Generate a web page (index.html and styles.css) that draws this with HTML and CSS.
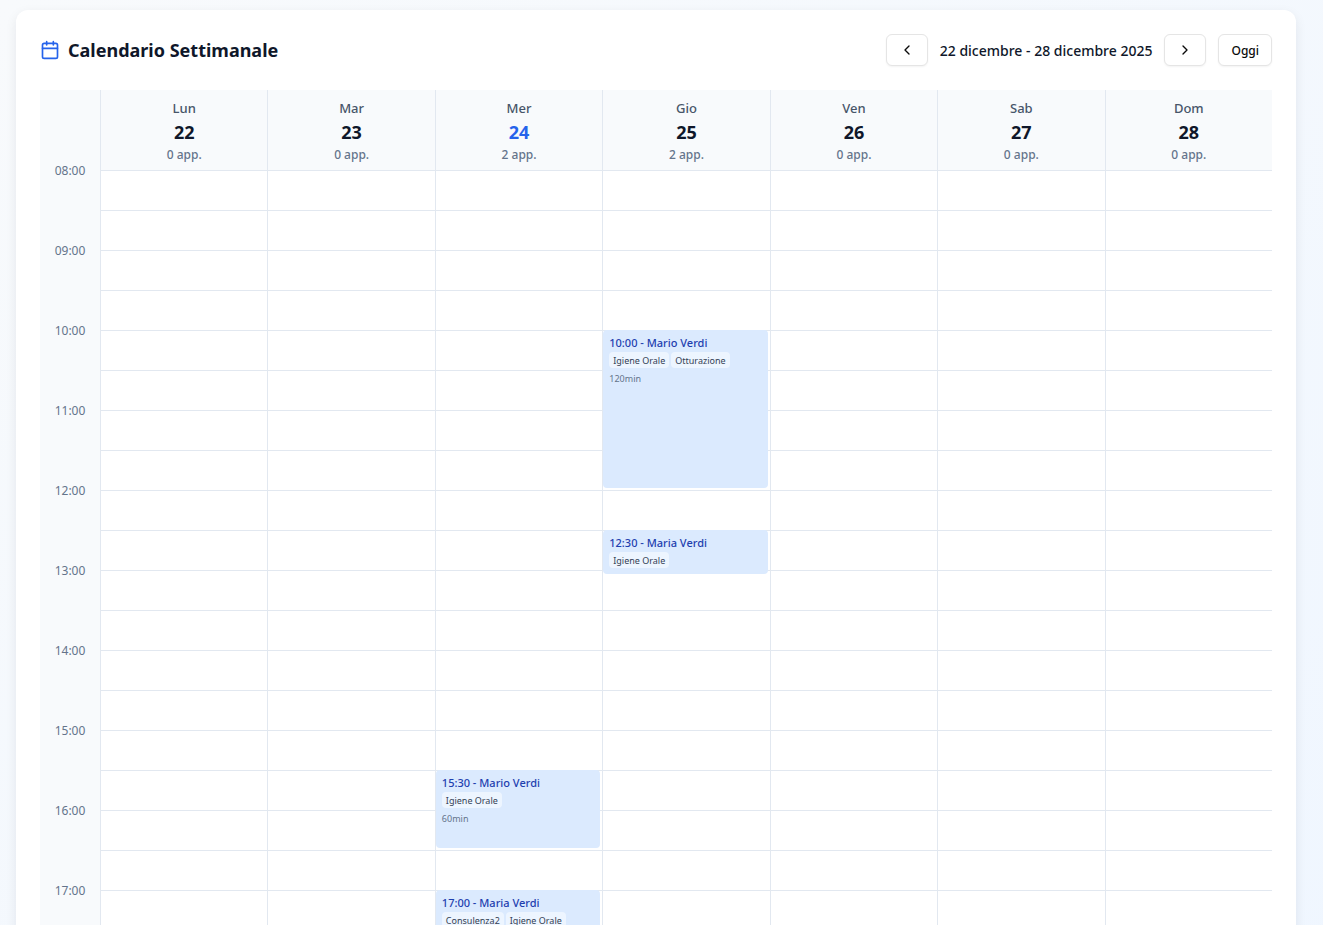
FILE: index.html
```html
<!DOCTYPE html>
<html lang="it">
<head>
    <meta charset="UTF-8">
    <meta name="viewport" content="width=device-width, initial-scale=1.0">
    <title>Calendario Settimanale</title>
    <link rel="stylesheet" href="styles.css">
</head>
<body>
    <main class="card">
        <header class="toolbar">
            <h1 class="title">
                <svg class="title-icon" viewBox="0 0 24 24" aria-hidden="true">
                    <path d="M8 2v4M16 2v4M3 10h18"/>
                    <rect x="3" y="4" width="18" height="18" rx="2"/>
                </svg>
                Calendario Settimanale
            </h1>
            <div class="nav">
                <button type="button" class="btn btn-icon" aria-label="Settimana precedente">
                    <svg viewBox="0 0 24 24"><path d="m15 18-6-6 6-6"/></svg>
                </button>
                <span class="range">22 dicembre - 28 dicembre 2025</span>
                <button type="button" class="btn btn-icon" aria-label="Settimana successiva">
                    <svg viewBox="0 0 24 24"><path d="m9 18 6-6-6-6"/></svg>
                </button>
                <button type="button" class="btn">Oggi</button>
            </div>
        </header>

        <div class="week">
            <!-- Colonna degli orari -->
            <div class="hours">
                <div class="hour">08:00</div>
                <div class="hour">09:00</div>
                <div class="hour">10:00</div>
                <div class="hour">11:00</div>
                <div class="hour">12:00</div>
                <div class="hour">13:00</div>
                <div class="hour">14:00</div>
                <div class="hour">15:00</div>
                <div class="hour">16:00</div>
                <div class="hour">17:00</div>
                <div class="hour">18:00</div>
            </div>

            <!-- Giorni: ogni riga di .slots vale 30 minuti -->
            <section class="day">
                <div class="day-head">
                    <div class="day-name">Lun</div>
                    <div class="day-number">22</div>
                    <div class="day-count">0 app.</div>
                </div>
                <div class="slots"></div>
            </section>

            <section class="day">
                <div class="day-head">
                    <div class="day-name">Mar</div>
                    <div class="day-number">23</div>
                    <div class="day-count">0 app.</div>
                </div>
                <div class="slots"></div>
            </section>

            <section class="day">
                <div class="day-head">
                    <div class="day-name">Mer</div>
                    <div class="day-number today">24</div>
                    <div class="day-count">2 app.</div>
                </div>
                <div class="slots">
                    <article class="event" style="grid-row: 16 / span 2">
                        <div class="event-title">15:30 - Mario Verdi</div>
                        <div class="tags"><span class="tag">Igiene Orale</span></div>
                        <div class="duration">60min</div>
                    </article>
                    <article class="event" style="grid-row: 19 / span 3">
                        <div class="event-title">17:00 - Maria Verdi</div>
                        <div class="tags"><span class="tag">Consulenza2</span><span class="tag">Igiene Orale</span></div>
                        <div class="duration">90min</div>
                    </article>
                </div>
            </section>

            <section class="day">
                <div class="day-head">
                    <div class="day-name">Gio</div>
                    <div class="day-number">25</div>
                    <div class="day-count">2 app.</div>
                </div>
                <div class="slots">
                    <article class="event" style="grid-row: 5 / span 4">
                        <div class="event-title">10:00 - Mario Verdi</div>
                        <div class="tags"><span class="tag">Igiene Orale</span><span class="tag">Otturazione</span></div>
                        <div class="duration">120min</div>
                    </article>
                    <article class="event event-short" style="grid-row: 10 / span 1">
                        <div class="event-title">12:30 - Maria Verdi</div>
                        <div class="tags"><span class="tag">Igiene Orale</span></div>
                    </article>
                </div>
            </section>

            <section class="day">
                <div class="day-head">
                    <div class="day-name">Ven</div>
                    <div class="day-number">26</div>
                    <div class="day-count">0 app.</div>
                </div>
                <div class="slots"></div>
            </section>

            <section class="day">
                <div class="day-head">
                    <div class="day-name">Sab</div>
                    <div class="day-number">27</div>
                    <div class="day-count">0 app.</div>
                </div>
                <div class="slots"></div>
            </section>

            <section class="day">
                <div class="day-head">
                    <div class="day-name">Dom</div>
                    <div class="day-number">28</div>
                    <div class="day-count">0 app.</div>
                </div>
                <div class="slots"></div>
            </section>
        </div>
    </main>
</body>
</html>
```
FILE: styles.css
```css
* {
    box-sizing: border-box;
}
body {
    margin: 0;
    padding: 10px 27px 24px 16px;
    font-family: "Segoe UI", "Noto Sans", sans-serif;
    color: #0f172a;
    background: linear-gradient(to bottom right, #f8fafc, #eff6ff);
}
.card {
    padding: 24px;
    background-color: #fff;
    border-radius: 12px;
    box-shadow: 0 4px 12px rgba(15, 23, 42, 0.08);
}

/* Barra superiore */
.toolbar {
    display: flex;
    justify-content: space-between;
    align-items: center;
    margin-bottom: 24px;
}
.title {
    display: flex;
    align-items: center;
    gap: 8px;
    margin: 0;
    font-size: 18px;
    font-weight: 700;
    line-height: 32px;
}
svg {
    width: 16px;
    height: 16px;
    fill: none;
    stroke: currentColor;
    stroke-width: 2;
    stroke-linecap: round;
    stroke-linejoin: round;
}
.title-icon {
    width: 20px;
    height: 20px;
    color: #2563eb;
}
.nav {
    display: flex;
    align-items: center;
    gap: 12px;
}
.range {
    font-size: 14px;
    font-weight: 500;
}
.btn {
    display: flex;
    align-items: center;
    justify-content: center;
    height: 32px;
    padding: 0 12px;
    font-family: inherit;
    font-size: 12px;
    font-weight: 500;
    color: #0a0a0a;
    background-color: #fff;
    border: 1px solid #e5e5e5;
    border-radius: 6px;
    box-shadow: 0 1px 2px rgba(0, 0, 0, 0.05);
    cursor: pointer;
}
.btn:hover {
    background-color: #f5f5f5;
}
.btn-icon {
    width: 42px;
}

/* Griglia settimanale */
.week {
    display: grid;
    grid-template-columns: 60px repeat(7, 1fr);
}
.hours {
    padding-top: 70px;
    background-color: #f8fafc;
}
.hour {
    height: 80px;
    font-size: 12px;
    line-height: 22px;
    text-align: center;
    color: #64748b;
}
.day {
    min-width: 0;
    border-left: 1px solid #e2e8f0;
}
.day-head {
    height: 80px;
    padding-top: 8px;
    text-align: center;
    background-color: #f8fafc;
}
.day-name {
    font-size: 13px;
    font-weight: 500;
    line-height: 20px;
    color: #475569;
}
.day-number {
    font-size: 18px;
    font-weight: 700;
    line-height: 29px;
}
.today {
    color: #2563eb;
}
.day-count {
    font-size: 12px;
    font-weight: 500;
    line-height: 16px;
    color: #64748b;
}
.slots {
    display: grid;
    grid-template-rows: repeat(22, 40px);
    background: repeating-linear-gradient(to bottom, #e2e8f0 0 1px, transparent 1px 40px);
}

/* Appuntamenti */
.event {
    margin: 0 2px 2px 0;
    padding: 4px 6px;
    overflow: hidden;
    background-color: #dbeafe;
    border-radius: 4px;
}
.event-short {
    height: 44px;
}
.event-title {
    font-size: 11px;
    font-weight: 500;
    line-height: 18px;
    color: #1e40af;
    white-space: nowrap;
}
.tags {
    display: flex;
    gap: 2px;
}
.tag {
    padding: 1px 4px 0;
    font-size: 9px;
    line-height: 15px;
    color: #334155;
    background-color: #edf5ff;
    border-radius: 4px;
    white-space: nowrap;
}
.duration {
    margin-top: 3px;
    font-size: 9px;
    line-height: 16px;
    color: #64748b;
}
```
